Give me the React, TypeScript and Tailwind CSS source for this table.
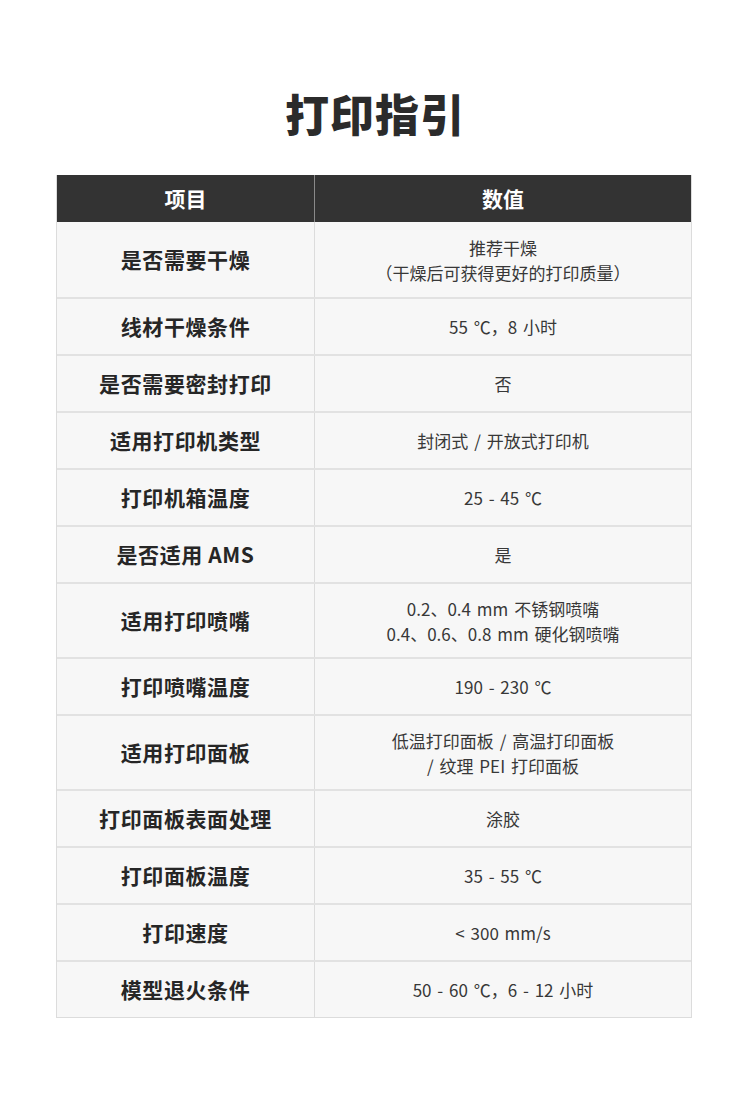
const rows: { label: string; value: string[] }[] = [
  { label: "是否需要干燥", value: ["推荐干燥", "（干燥后可获得更好的打印质量）"] },
  { label: "线材干燥条件", value: ["55 ℃，8 小时"] },
  { label: "是否需要密封打印", value: ["否"] },
  { label: "适用打印机类型", value: ["封闭式 / 开放式打印机"] },
  { label: "打印机箱温度", value: ["25 - 45 ℃"] },
  { label: "是否适用 AMS", value: ["是"] },
  { label: "适用打印喷嘴", value: ["0.2、0.4 mm 不锈钢喷嘴", "0.4、0.6、0.8 mm 硬化钢喷嘴"] },
  { label: "打印喷嘴温度", value: ["190 - 230 ℃"] },
  { label: "适用打印面板", value: ["低温打印面板 / 高温打印面板", "/ 纹理 PEI 打印面板"] },
  { label: "打印面板表面处理", value: ["涂胶"] },
  { label: "打印面板温度", value: ["35 - 55 ℃"] },
  { label: "打印速度", value: ["< 300 mm/s"] },
  { label: "模型退火条件", value: ["50 - 60 ℃，6 - 12 小时"] },
];

export default function App() {
  return (
    <div
      className="w-[750px] h-[1114px] bg-white pt-[86px]"
      style={{ fontFamily: '"Noto Sans CJK SC", "Noto Sans", sans-serif' }}
    >
      <h1 className="text-center text-[44px] leading-[54px] font-black text-[#2b2b2b] tracking-[1px]">
        打印指引
      </h1>
      <div className="ml-[56px] mt-[35px] w-[636px] border border-[#dcdcdc] border-t-0">
        <div className="flex h-[47px] bg-[#333333] text-white text-[21px] font-bold">
          <div className="w-[258px] flex items-center justify-center border-r border-[#8a8a8a]">项目</div>
          <div className="flex-1 flex items-center justify-center">数值</div>
        </div>
        {rows.map((r, i) => (
          <div
            key={r.label}
            className={`flex bg-[#f7f7f7] ${i > 0 ? "border-t-2 border-[#e2e2e2]" : ""} ${
              r.value.length > 1 ? "h-[75px]" : "h-[57px]"
            }`}
          >
            <div className="w-[258px] flex items-center justify-center border-r border-[#dcdcdc] text-[21px] tracking-[0.6px] font-bold text-[#262626]">
              {r.label}
            </div>
            <div className="flex-1 flex flex-col items-center justify-center text-[17px] leading-[25px] text-[#383838] [word-spacing:2px]">
              {r.value.map((v) => (
                <div key={v}>{v}</div>
              ))}
            </div>
          </div>
        ))}
      </div>
    </div>
  );
}
